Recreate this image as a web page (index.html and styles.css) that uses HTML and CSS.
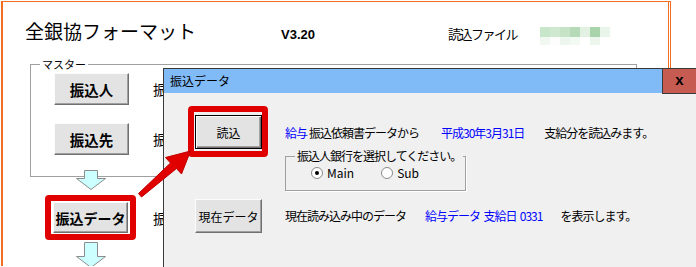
FILE: index.html
```html
<!DOCTYPE html>
<html lang="ja">
<head>
    <meta charset="UTF-8">
    <meta name="viewport" content="width=device-width, initial-scale=1.0">
    <title>全銀協フォーマット</title>
    <link rel="stylesheet" href="styles.css">
</head>
<body>
    <div class="sheet">
        <div class="head">
            <h1 class="title">全銀協フォーマット</h1>
            <span class="ver">V3.20</span>
            <span class="file-label">読込ファイル</span>
            <div class="mosaic">
                <i></i><i></i><i></i><i></i><i></i><i></i><i></i>
                <i></i><i></i><i></i><i></i><i></i><i></i><i></i>
            </div>
        </div>

        <fieldset class="master">
            <legend>マスター</legend>
            <div class="row">
                <button class="btn">振込人</button>
                <span class="note">振込人</span>
            </div>
            <div class="row row-gap">
                <button class="btn">振込先</button>
                <span class="note">振込先</span>
            </div>
        </fieldset>

        <div class="flow">
            <svg class="down" width="31" height="20" viewBox="0 0 31 20">
                <polygon points="8.5,0.5 21.5,0.5 21.5,8.5 29.5,8.5 15,19.5 0.5,8.5 8.5,8.5" />
            </svg>
            <div class="row">
                <div class="mark">
                    <button class="btn">振込データ</button>
                </div>
                <span class="note note-flow">振込み</span>
            </div>
            <svg class="down down-last" width="31" height="26" viewBox="0 0 31 26">
                <polygon points="8.5,0.5 21.5,0.5 21.5,14.5 29.5,14.5 15,25.5 0.5,14.5 8.5,14.5" />
            </svg>
        </div>
    </div>

    <!-- dialog window on top of the sheet -->
    <div class="dialog">
        <div class="titlebar">
            <span class="caption">振込データ</span>
            <span class="close">x</span>
        </div>
        <div class="dlg-body">
            <div class="mark mark-dlg">
                <button class="btn btn-dlg btn-default">読込</button>
            </div>
            <div class="info">
                <p class="line">
                    <span class="blue">給与</span><span class="seg-a">振込依頼書データから</span><span class="blue seg-b">平成30年3月31日</span><span class="seg-c">支給分を読込みます。</span>
                </p>
                <fieldset class="bank">
                    <legend>振込人銀行を選択してください。</legend>
                    <label class="radio"><span class="dot dot-on"></span>Main</label>
                    <label class="radio radio-sub"><span class="dot"></span>Sub</label>
                </fieldset>
            </div>
            <button class="btn btn-dlg btn-cur">現在データ</button>
            <p class="line line-cur">
                <span>現在読み込み中のデータ</span><span class="blue seg-d">給与データ&nbsp;&nbsp;支給日&nbsp;&nbsp;0331</span><span class="seg-e">を表示します。</span>
            </p>
        </div>
    </div>

    <svg class="pointer" width="696" height="267" viewBox="0 0 696 267">
        <polygon points="138.5,193.5 170.5,163 165.5,157.5 190.5,151 181.5,174 176.5,168.5 141.5,197" />
    </svg>
</body>
</html>
```

FILE: styles.css
```css
body {
    margin: 0;
    width: 696px;
    height: 267px;
    overflow: hidden;
    position: relative;
    background: #fff;
    color: #000;
    font-family: "Noto Sans CJK JP", sans-serif;
}
.sheet {
    margin: 1px 0 0 1px;
    width: 665px;
    height: 264px;
    overflow: hidden;
    border-top: 1px solid #f26f21;
    border-left: 2px solid #f26f21;
    border-right: 3px double #f26f21;
}
.head {
    display: flex;
    align-items: flex-start;
    height: 20px;
    margin-top: 19px;
}
.title {
    box-sizing: border-box;
    width: 278px;
    margin: 0;
    padding-left: 22px;
    font-size: 19px;
    font-weight: 400;
    line-height: 20px;
}
.ver {
    width: 167px;
    margin-top: 6px;
    font-family: "Liberation Sans", Arial, sans-serif;
    font-size: 13px;
    font-weight: bold;
    line-height: 15px;
}
.file-label {
    width: 92px;
    margin-top: 5px;
    font-size: 13px;
    line-height: 15px;
    letter-spacing: -1.5px;
}
.mosaic {
    display: grid;
    grid-template-columns: repeat(7, 10px);
    grid-template-rows: 10px 8px;
    margin-top: 6px;
}
.mosaic i:nth-child(1) { background: #c8e6ca; }
.mosaic i:nth-child(2) { background: #cfe8d0; }
.mosaic i:nth-child(3) { background: #c6e3c7; }
.mosaic i:nth-child(4) { background: #b6dab8; }
.mosaic i:nth-child(5) { background: #e3f1e3; }
.mosaic i:nth-child(6) { background: #a9d4ab; }
.mosaic i:nth-child(7) { background: #e9f4ea; }
.mosaic i:nth-child(8) { background: #f1f8f1; }
.mosaic i:nth-child(9) { background: #fdfdfd; }
.mosaic i:nth-child(10) { background: #edf6ee; }
.mosaic i:nth-child(11) { background: #f3f9f3; }
.mosaic i:nth-child(12) { background: #fff; }
.mosaic i:nth-child(13) { background: #ecf6ec; }
.master {
    box-sizing: border-box;
    width: 607px;
    min-width: 0;
    margin: 17px 0 0 27px;
    padding: 0 0 21px 23px;
    border: 1px solid #a0a0a0;
}
.master legend {
    margin-left: -14px;
    padding: 0 2px;
    font-size: 11px;
    line-height: 12px;
}
.row {
    display: flex;
    align-items: center;
    margin-top: 3px;
}
.row-gap {
    margin-top: 18px;
}
.btn {
    box-sizing: border-box;
    width: 75px;
    height: 32px;
    padding: 0;
    background: #e3e3e3;
    border: 1px solid;
    border-color: #fcfcfc #707070 #707070 #fcfcfc;
    box-shadow: inset -1px -1px 0 #a0a0a0;
    font-family: "Noto Sans CJK JP", sans-serif;
    font-size: 14.5px;
    font-weight: bold;
    color: #000;
}
.note {
    margin-left: 24px;
    font-size: 14px;
    line-height: 12px;
    white-space: nowrap;
}
.flow {
    margin-top: -7px;
    padding-left: 42px;
}
.down {
    display: block;
    margin-left: 31px;
    fill: #ccffff;
    stroke: #8c8c8c;
    stroke-width: 1;
}
.down-last {
    margin-top: 2px;
}
.mark {
    padding: 1px 2px;
    border: 6px solid #e00000;
    border-radius: 4px;
}
.flow .row {
    margin-top: 5px;
}
.flow .mark .btn {
    height: 31px;
    font-size: 14px;
}
.note-flow {
    margin-left: 17px;
}

/* dialog */
.dialog {
    position: absolute;
    left: 163px;
    top: 68px;
    width: 532px;
    height: 198px;
    background: #f0f0f0;
    border: 1px solid #3a3a3a;
    border-bottom: 0;
    font-size: 12px;
}
.titlebar {
    display: flex;
    justify-content: space-between;
    align-items: center;
    height: 24px;
    background: #80bbf7;
}
.caption {
    padding-left: 6px;
    font-size: 12px;
    line-height: 12px;
}
.close {
    box-sizing: border-box;
    width: 34px;
    height: 25px;
    margin-top: 1px;
    border-left: 1px solid #3a3a3a;
    border-bottom: 1px solid #3a3a3a;
    background: #c65b52;
    font-family: "Liberation Sans", Arial, sans-serif;
    font-size: 15px;
    font-weight: bold;
    line-height: 22px;
    text-align: center;
}
.dlg-body {
    display: grid;
    grid-template-columns: 97px 1fr;
    row-gap: 8px;
    padding: 13px 0 0 24px;
}
.mark-dlg {
    justify-self: start;
    align-self: start;
    padding: 3px 0 2px 1px;
}
.btn-dlg {
    width: 67px;
    height: 34px;
    font-size: 12px;
    font-weight: normal;
}
.btn-default {
    border: 1px solid #000;
    box-shadow: inset 1px 1px 0 #fcfcfc, inset -1px -1px 0 #707070, inset -2px -2px 0 #a0a0a0;
}
.btn-cur {
    margin-left: 7px;
}
.line {
    margin: 19px 0 0;
    line-height: 16px;
    white-space: nowrap;
    letter-spacing: -1px;
}
.line-cur {
    margin: 0;
    align-self: center;
}
.blue {
    color: #0000ff;
}
.seg-a {
    margin-left: 2px;
}
.seg-b {
    margin-left: 22px;
}
.seg-c {
    margin-left: 20px;
}
.seg-d {
    margin-left: 19px;
}
.seg-e {
    margin-left: 18px;
}
.bank {
    box-sizing: border-box;
    width: 181px;
    min-width: 0;
    margin: 9px 0 0;
    padding: 0 0 10px 25px;
    border: 1px solid #a0a0a0;
    box-shadow: 1px 1px 0 #fff;
    display: flex;
}
.bank legend {
    margin-left: -16px;
    padding: 0 2px;
    font-size: 12px;
    line-height: 12px;
    letter-spacing: -1px;
}
.radio {
    display: flex;
    align-items: center;
    margin-top: 4px;
    height: 14px;
    line-height: 14px;
    letter-spacing: 0;
}
.radio-sub {
    margin-left: 27px;
}
.dot {
    box-sizing: border-box;
    width: 12px;
    height: 12px;
    margin-right: 4px;
    border: 1px solid #8a8a8a;
    border-radius: 50%;
    background: #fff;
    position: relative;
}
.dot-on::after {
    content: "";
    position: absolute;
    left: 3px;
    top: 3px;
    width: 4px;
    height: 4px;
    border-radius: 50%;
    background: #000;
}

.pointer {
    position: absolute;
    left: 0;
    top: 0;
    fill: #e00000;
    stroke: #c00000;
    stroke-width: 1;
    stroke-linejoin: round;
}
```
